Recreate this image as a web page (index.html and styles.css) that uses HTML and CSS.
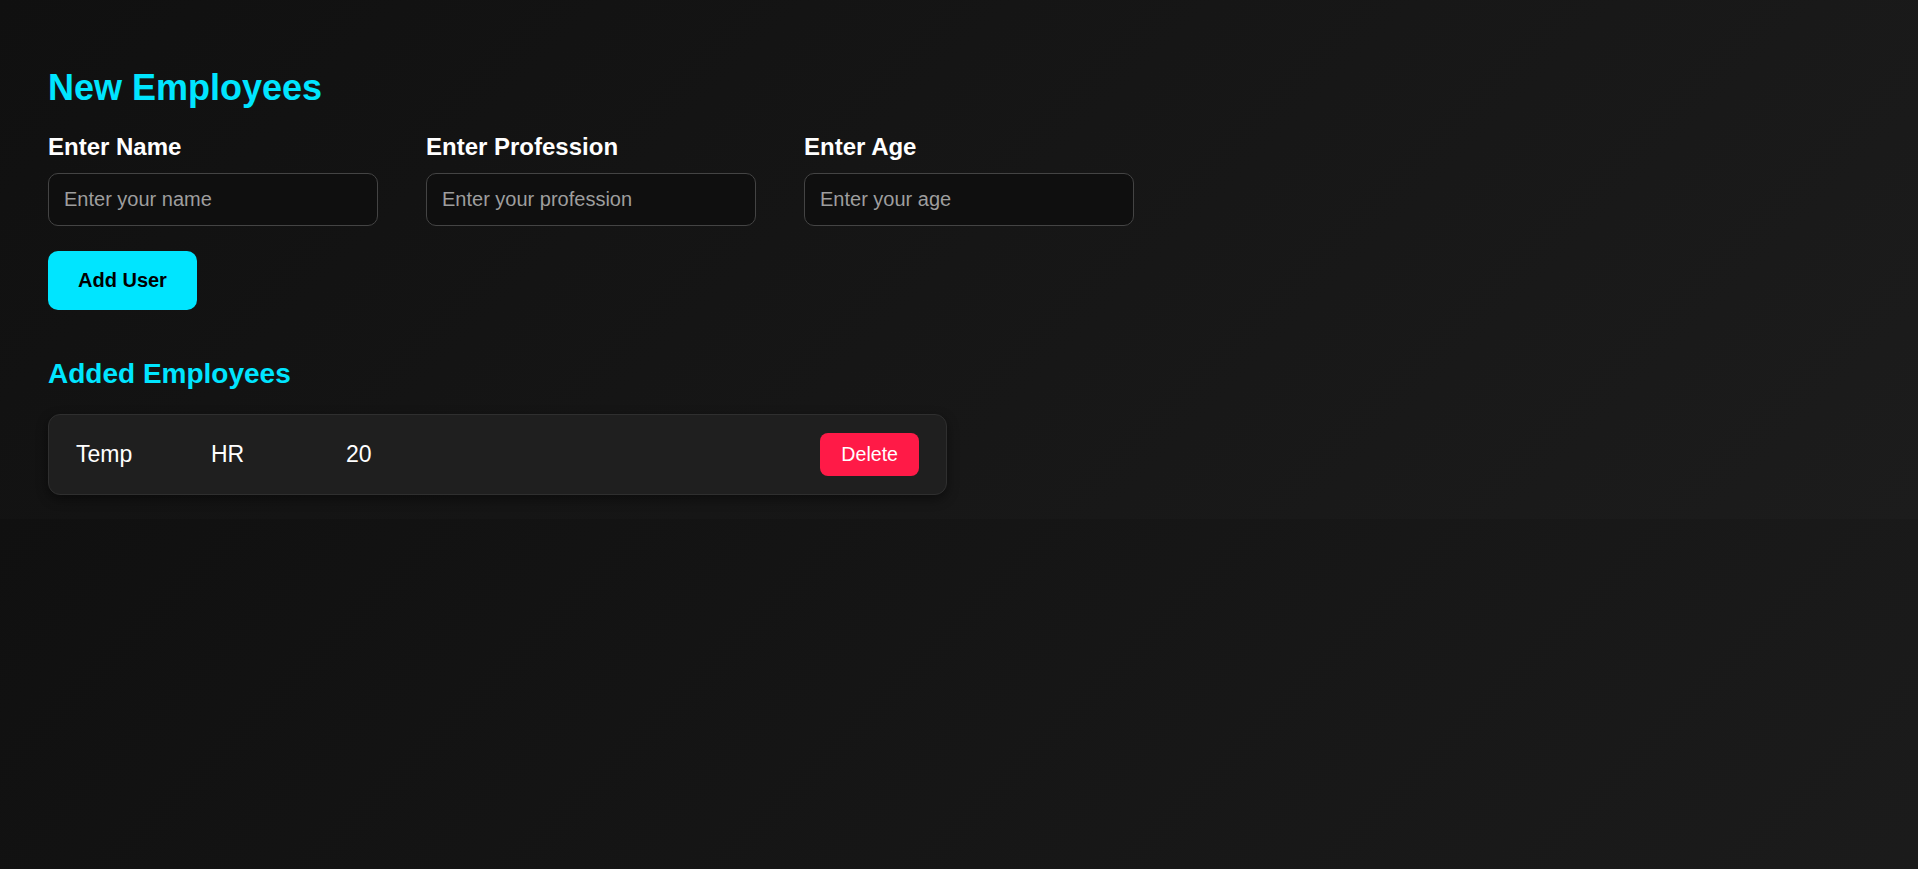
FILE: index.html
```html
<!DOCTYPE html>
<html lang="en">
<head>
<meta charset="utf-8">
<title>Employees</title>
<link rel="stylesheet" href="styles.css">
</head>
<body>
<main class="page">
  <h1 class="title">New Employees</h1>
  <div class="fields">
    <div class="field">
      <label class="label" for="name">Enter Name</label>
      <input class="input" id="name" type="text" placeholder="Enter your name">
    </div>
    <div class="field">
      <label class="label" for="prof">Enter Profession</label>
      <input class="input" id="prof" type="text" placeholder="Enter your profession">
    </div>
    <div class="field">
      <label class="label" for="age">Enter Age</label>
      <input class="input" id="age" type="text" placeholder="Enter your age">
    </div>
  </div>
  <button class="add-btn" type="button">Add User</button>
  <h2 class="subtitle">Added Employees</h2>
  <div class="list">
    <div class="card">
      <span class="cell">Temp</span>
      <span class="cell">HR</span>
      <span class="cell">20</span>
      <button class="del-btn" type="button">Delete</button>
    </div>
  </div>
</main>
</body>
</html>
```
FILE: styles.css
```css
html {
  background: linear-gradient(135deg, #101010 0%, #1c1c1c 100%);
}
body {
  margin: 0;
  font-family: "Liberation Sans", Arial, sans-serif;
  color: #fff;
}
.page {
  padding: 67px 48px 24px;
}
.title {
  margin: 0;
  font-size: 36px;
  font-weight: 700;
  line-height: normal;
  color: #00e5ff;
}
.fields {
  display: flex;
  gap: 48px;
  margin-top: 24px;
}
.field {
  display: flex;
  flex-direction: column;
  gap: 12px;
}
.label {
  font-size: 24px;
  font-weight: 700;
  line-height: normal;
  color: #fff;
}
.input {
  width: 330px;
  box-sizing: border-box;
  padding: 14px 15px;
  font-family: "Liberation Sans", Arial, sans-serif;
  font-size: 20px;
  line-height: normal;
  color: #fff;
  background: #0f0f0f;
  border: 1px solid #444;
  border-radius: 10px;
  outline: none;
}
.input::placeholder {
  color: #9e9e9e;
}
.add-btn {
  display: block;
  margin-top: 25px;
  padding: 18px 30px;
  font-family: "Liberation Sans", Arial, sans-serif;
  font-size: 20px;
  font-weight: 700;
  line-height: 23px;
  color: #000;
  background: #00e5ff;
  border: none;
  border-radius: 10px;
}
.subtitle {
  margin: 48px 0 0;
  font-size: 28px;
  font-weight: 700;
  line-height: normal;
  color: #00e5ff;
}
.list {
  margin-top: 24px;
}
.card {
  width: 899px;
  box-sizing: border-box;
  display: flex;
  align-items: center;
  padding: 18px 27px;
  background: #1f1f1f;
  border: 1px solid #2f2f2f;
  border-radius: 12px;
  box-shadow: 0 4px 12px rgba(0, 0, 0, 0.45);
}
.cell {
  width: 135px;
  font-size: 23px;
  color: #fff;
}
.del-btn {
  margin-left: auto;
  padding: 10px 21px;
  font-family: "Liberation Sans", Arial, sans-serif;
  font-size: 19.6px;
  line-height: 23px;
  color: #fff;
  background: #ff1a47;
  border: none;
  border-radius: 8px;
}
```
